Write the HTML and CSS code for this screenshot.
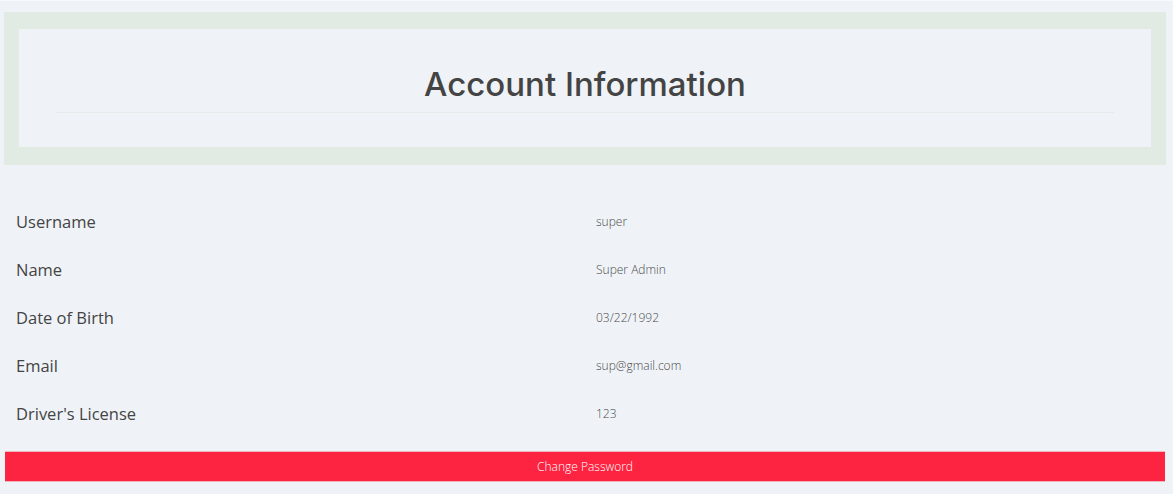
FILE: index.html
```html
<!DOCTYPE html>
<html>
<head>
<meta charset="utf-8">
<link rel="stylesheet" href="styles.css">
</head>
<body>
<div class="page">
  <div class="header-box">
    <div class="header-inner">
      <h1 class="title">Account Information</h1>
      <div class="rule"></div>
    </div>
  </div>
  <div class="info">
    <div class="row"><div class="label">Username</div><div class="value">super</div></div>
    <div class="row"><div class="label">Name</div><div class="value">Super Admin</div></div>
    <div class="row"><div class="label">Date of Birth</div><div class="value">03/22/1992</div></div>
    <div class="row"><div class="label">Email</div><div class="value">sup@gmail.com</div></div>
    <div class="row"><div class="label">Driver's License</div><div class="value">123</div></div>
  </div>
  <button class="btn">Change Password</button>
</div>
</body>
</html>
```
FILE: styles.css
```css
html, body {
  margin: 0;
  padding: 0;
  background: #eff3f7;
}
body {
  border-top: 1px solid #f7f9fb;
  font-family: "Open Sans", "Liberation Sans", sans-serif;
  color: #444;
}
.page {
  padding: 11px 8px 0 5px;
}
.header-box {
  margin: 0 -1px;
  background: #e2ebe3;
  padding: 17px 15px 18px;
}
.header-inner {
  background: #eff3f7;
  padding: 35px 37px 34px;
}
.title {
  margin: 0;
  text-align: center;
  font-family: Inter, "Open Sans", sans-serif;
  font-weight: 500;
  font-size: 33px;
  line-height: 40px;
  color: #444;
  letter-spacing: 0;
}
.rule {
  height: 1px;
  background: #e8eaea;
  margin-top: 8px;
}
.info {
  padding-top: 32px;
  padding-bottom: 14px;
}
.row {
  display: grid;
  grid-template-columns: 1fr 1fr;
  height: 48px;
  align-items: center;
}
.label {
  padding: 0 11px;
  font-size: 16.5px;
  color: #444;
}
.value {
  padding: 0 11px;
  font-size: 12px;
  font-weight: 300;
  color: #4a4a4a;
}
.btn {
  display: block;
  width: 100%;
  height: 31px;
  border: 0;
  border-top: 1px solid #f1b4bd;
  border-bottom: 1px solid #f1b4bd;
  background: #fd2442;
  color: #fff;
  font-family: "Open Sans", sans-serif;
  font-weight: 300;
  font-size: 12px;
  padding: 0;
}
```
